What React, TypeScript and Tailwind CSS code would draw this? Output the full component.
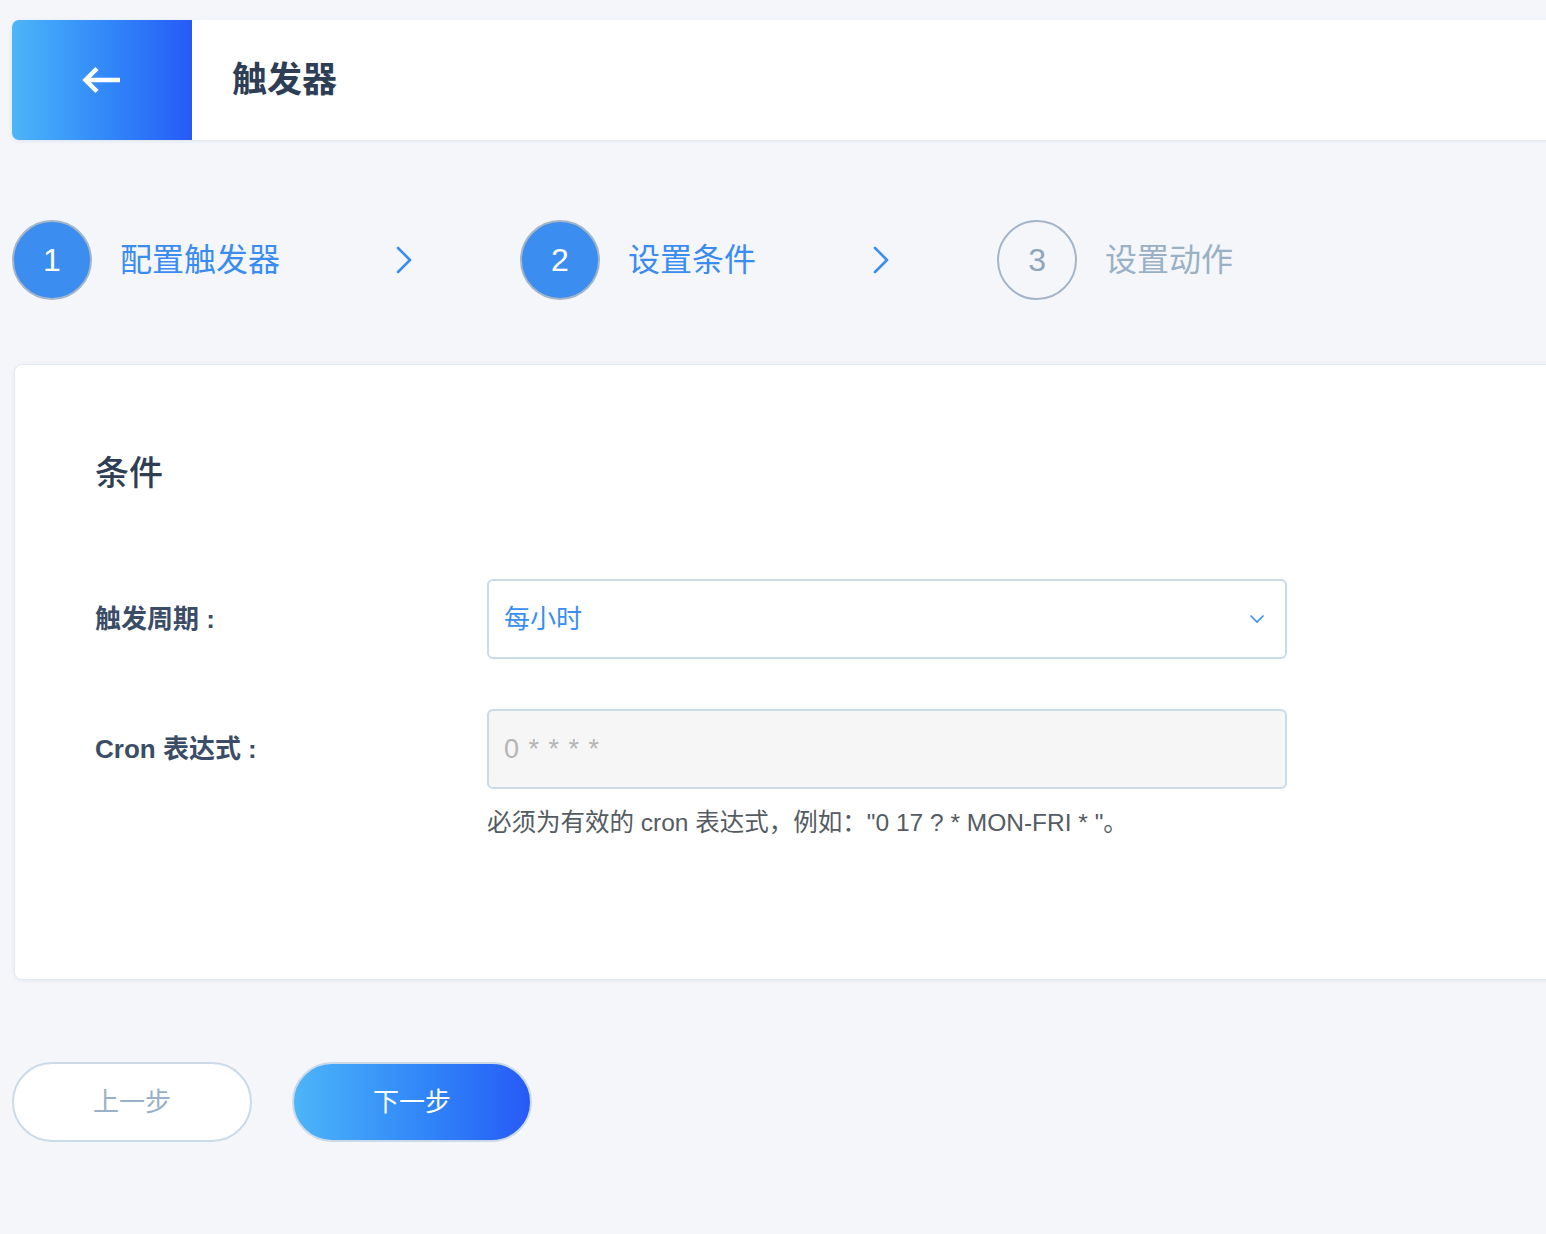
import React from 'react';

const font = { fontFamily: '"Liberation Sans", "Noto Sans CJK SC", sans-serif' };

function StepChevron() {
  return (
    <svg width="18" height="28" viewBox="0 0 18 28" fill="none" className="shrink-0">
      <path d="M3 2l12 12-12 12" stroke="#3b8ef0" strokeWidth={2.6} strokeLinecap="round" strokeLinejoin="round" />
    </svg>
  );
}

interface StepProps {
  num: number;
  label: string;
  active: boolean;
}

function Step({ num, label, active }: StepProps) {
  return (
    <div className="flex items-center shrink-0">
      <div
        className={`w-[80px] h-[80px] rounded-full border-2 border-[#a3b5c8] flex items-center justify-center text-[32px] ${
          active ? 'bg-[#3b8ef0] text-white' : 'bg-transparent text-[#8ea5bc]'
        }`}
      >
        {num}
      </div>
      <span className={`ml-[28px] text-[32px] leading-none ${active ? 'text-[#3b8cf0]' : 'text-[#9ab0c5]'}`}>
        {label}
      </span>
    </div>
  );
}

export default function App() {
  return (
    <div className="min-h-[1234px] w-full bg-[#f4f6fa] overflow-hidden" style={font}>
      {/* header */}
      <div className="pt-[20px] pl-[12px]">
        <div className="flex h-[120px] w-[1560px] bg-white rounded-l-[7px] shadow-[0_1px_4px_rgba(60,90,130,0.12)]">
          <div className="w-[180px] h-full rounded-l-[7px] bg-gradient-to-r from-[#4db5f8] to-[#2859f6] flex items-center justify-center">
            <svg width="42" height="30" viewBox="0 0 42 30" fill="none">
              <path d="M39 15H6" stroke="white" strokeWidth={4.5} />
              <path d="M16 3.5L4.5 15 16 26.5" stroke="white" strokeWidth={4.5} strokeLinejoin="miter" />
            </svg>
          </div>
          <div className="flex items-center pl-[40px] text-[35px] font-bold text-[#2d3e55]">触发器</div>
        </div>
      </div>

      {/* steps */}
      <div className="flex items-center pl-[12px] mt-[80px] h-[80px]">
        <Step num={1} label="配置触发器" active />
        <div className="ml-[115px]"><StepChevron /></div>
        <div className="ml-[107px]"><Step num={2} label="设置条件" active /></div>
        <div className="ml-[116px]"><StepChevron /></div>
        <div className="ml-[107px]"><Step num={3} label="设置动作" active={false} /></div>
      </div>

      {/* card */}
      <div className="mt-[64px] ml-[14px] w-[1560px] h-[616px] bg-white rounded-l-[8px] border border-[#e3e9f1] shadow-[0_1px_4px_rgba(60,90,130,0.08)] pl-[80px] pt-[84px]">
        <div className="text-[34px] leading-[48px] font-medium text-[#2d3e55]">条件</div>

        <div className="mt-[82px] flex items-center">
          <div className="w-[392px] text-[26px] font-bold text-[#3b4d66]">触发周期 :</div>
          <div className="w-[800px] h-[80px] rounded-[6px] border-2 border-[#cbdae8] bg-white flex items-center justify-between pl-[15px] pr-[20px]">
            <span className="text-[26px] text-[#3b8ef0]">每小时</span>
            <svg width="16" height="10" viewBox="0 0 16 10" fill="none">
              <path d="M1.5 1.5L8 8l6.5-6.5" stroke="#3b8ef0" strokeWidth={1.6} />
            </svg>
          </div>
        </div>

        <div className="mt-[50px] flex items-center">
          <div className="w-[392px] text-[26px] font-bold text-[#3b4d66]">Cron 表达式 :</div>
          <div className="w-[800px] h-[80px] rounded-[6px] border-2 border-[#cbdae8] bg-[#f6f6f6] flex items-center pl-[15px]">
            <span className="text-[27px] tracking-[1px] text-[#b5b5b5]">0 * * * *</span>
          </div>
        </div>
        <div className="ml-[392px] mt-[16px] text-[24.5px] text-[#555b63]">
          必须为有效的 cron 表达式，例如："0 17 ? * MON-FRI * "。
        </div>
      </div>

      {/* buttons */}
      <div className="flex gap-[40px] pl-[12px] mt-[82px]">
        <button className="w-[240px] h-[80px] rounded-full border-2 border-[#cbdae8] bg-white text-[26px] text-[#9ab0c6]">
          上一步
        </button>
        <button className="w-[240px] h-[80px] rounded-full border-2 border-[#cbdae8] bg-gradient-to-r from-[#4db5f8] to-[#2859f6] text-[26px] text-white">
          下一步
        </button>
      </div>
    </div>
  );
}
